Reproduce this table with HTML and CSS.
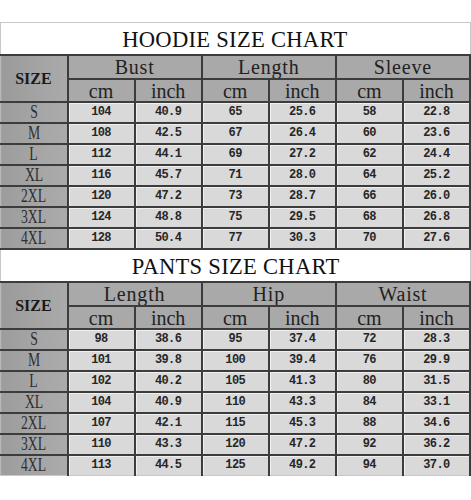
FILE: index.html
```html
<!DOCTYPE html>
<html>
<head>
<meta charset="utf-8">
<link rel="stylesheet" href="styles.css">
</head>
<body>
<div class="page">
<table class="chart">
  <colgroup>
    <col class="c-size"><col><col><col><col><col><col>
  </colgroup>
  <tbody>
    <tr class="title"><td colspan="7"><span>HOODIE SIZE CHART</span></td></tr>
    <tr class="h1">
      <td class="sz" rowspan="2"><span>SIZE</span></td>
      <td colspan="2"><span>Bust</span></td>
      <td colspan="2"><span>Length</span></td>
      <td colspan="2"><span>Sleeve</span></td>
    </tr>
    <tr class="h2">
      <td><span>cm</span></td><td><span>inch</span></td>
      <td><span>cm</span></td><td><span>inch</span></td>
      <td><span>cm</span></td><td><span>inch</span></td>
    </tr>
    <tr class="row"><th><span>S</span></th><td>104</td><td>40.9</td><td>65</td><td>25.6</td><td>58</td><td>22.8</td></tr>
    <tr class="row"><th><span>M</span></th><td>108</td><td>42.5</td><td>67</td><td>26.4</td><td>60</td><td>23.6</td></tr>
    <tr class="row"><th><span>L</span></th><td>112</td><td>44.1</td><td>69</td><td>27.2</td><td>62</td><td>24.4</td></tr>
    <tr class="row"><th><span>XL</span></th><td>116</td><td>45.7</td><td>71</td><td>28.0</td><td>64</td><td>25.2</td></tr>
    <tr class="row"><th><span>2XL</span></th><td>120</td><td>47.2</td><td>73</td><td>28.7</td><td>66</td><td>26.0</td></tr>
    <tr class="row"><th><span>3XL</span></th><td>124</td><td>48.8</td><td>75</td><td>29.5</td><td>68</td><td>26.8</td></tr>
    <tr class="row"><th><span>4XL</span></th><td>128</td><td>50.4</td><td>77</td><td>30.3</td><td>70</td><td>27.6</td></tr>
  </tbody>
  <tbody>
    <tr class="title"><td colspan="7"><span>PANTS SIZE CHART</span></td></tr>
    <tr class="h1">
      <td class="sz" rowspan="2"><span>SIZE</span></td>
      <td colspan="2"><span>Length</span></td>
      <td colspan="2"><span>Hip</span></td>
      <td colspan="2"><span>Waist</span></td>
    </tr>
    <tr class="h2">
      <td><span>cm</span></td><td><span>inch</span></td>
      <td><span>cm</span></td><td><span>inch</span></td>
      <td><span>cm</span></td><td><span>inch</span></td>
    </tr>
    <tr class="row"><th><span>S</span></th><td>98</td><td>38.6</td><td>95</td><td>37.4</td><td>72</td><td>28.3</td></tr>
    <tr class="row"><th><span>M</span></th><td>101</td><td>39.8</td><td>100</td><td>39.4</td><td>76</td><td>29.9</td></tr>
    <tr class="row"><th><span>L</span></th><td>102</td><td>40.2</td><td>105</td><td>41.3</td><td>80</td><td>31.5</td></tr>
    <tr class="row"><th><span>XL</span></th><td>104</td><td>40.9</td><td>110</td><td>43.3</td><td>84</td><td>33.1</td></tr>
    <tr class="row"><th><span>2XL</span></th><td>107</td><td>42.1</td><td>115</td><td>45.3</td><td>88</td><td>34.6</td></tr>
    <tr class="row"><th><span>3XL</span></th><td>110</td><td>43.3</td><td>120</td><td>47.2</td><td>92</td><td>36.2</td></tr>
    <tr class="row"><th><span>4XL</span></th><td>113</td><td>44.5</td><td>125</td><td>49.2</td><td>94</td><td>37.0</td></tr>
  </tbody>
</table>
</div>
</body>
</html>
```

FILE: styles.css
```css
html, body {
  margin: 0;
  padding: 0;
  background: #ffffff;
}

.page {
  padding-top: 22px;
  width: 471px;
}

.chart {
  width: 471px;
  border-collapse: collapse;
  table-layout: fixed;
  font-family: "Liberation Serif", "DejaVu Serif", serif;
  color: #1e1e1e;
}

.c-size {
  width: 67px;
}

.chart td,
.chart th {
  padding: 0;
  text-align: center;
  vertical-align: middle;
  border: 2px solid #3c3c3c;
  overflow: hidden;
  white-space: nowrap;
}

.chart span {
  display: inline-block;
  vertical-align: top;
}

/* title rows */
.title td {
  height: 31px;
  background: #ffffff;
  border-top: 1px solid #c8c8c8;
  border-left: 1px solid #c8c8c8;
  border-right: 1px solid #c8c8c8;
  font-size: 24px;
  line-height: 31px;
  color: #111111;
}

.title span {
  transform: translateY(1px) scaleX(0.94);
  letter-spacing: 0.3px;
}

/* header rows */
.h1 td,
.h2 td {
  background: #a9a9a9;
  font-size: 20px;
  color: #222222;
}

.h1 td {
  height: 22px;
  line-height: 22px;
}

.h1 span {
  letter-spacing: 0.8px;
}

.h2 td {
  height: 21px;
  line-height: 21px;
}

.h2 span {
  transform: translateY(1px);
}

.h1 td.sz {
  background: linear-gradient(90deg, #9a9a9a 0%, #a4a4a4 60%, #aaaaaa 100%);
  border-left: 1px solid #b8b8b8;
  font-size: 17px;
  font-weight: bold;
  color: #1a1a1a;
}

.h1 td.sz span {
  letter-spacing: 0;
  transform: scaleX(0.94);
}

/* data rows */
.row th {
  height: 19px;
  background: linear-gradient(90deg, #9c9c9c 0%, #a6a6a6 60%, #ababab 100%);
  border-left: 1px solid #b8b8b8;
  font-weight: normal;
  font-size: 18px;
  line-height: 19px;
  color: #2e2e2e;
}

.row th span {
  transform: scaleX(0.76);
}

.row td {
  background: #d9d9d9;
  box-shadow: inset 1px 1px 0 #f0f0f0;
  font-family: "Liberation Mono", "DejaVu Sans Mono", monospace;
  font-size: 12px;
  letter-spacing: -0.6px;
  font-weight: bold;
  line-height: 19px;
  color: #262626;
}

.chart tbody:last-child .row:last-child td,
.chart tbody:last-child .row:last-child th {
  border-bottom: 1px solid #c8c8c8;
}
```
